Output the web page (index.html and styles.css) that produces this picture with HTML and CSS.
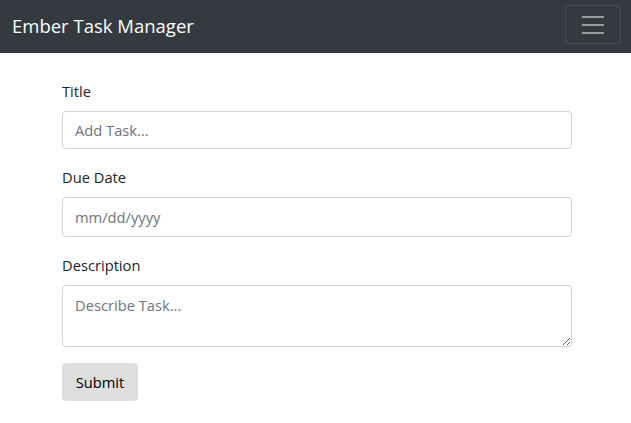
FILE: index.html
```html
<!DOCTYPE html>
<html lang="en">
<head>
<meta charset="utf-8">
<title>Ember Task Manager</title>
<link rel="stylesheet" href="styles.css">
</head>
<body>
<nav class="navbar">
  <a class="brand" href="#">Ember Task Manager</a>
  <button class="toggler" type="button" aria-label="Toggle navigation">
    <svg class="toggler-icon" viewBox="0 0 30 30" width="30" height="30">
      <path stroke="rgba(255,255,255,0.5)" stroke-width="2" stroke-miterlimit="10" d="M4 7h22M4 15h22M4 23h22"/>
    </svg>
  </button>
</nav>
<main class="content">
  <form class="task-form">
    <div class="group">
      <label class="label" for="title">Title</label>
      <input class="control" id="title" type="text" placeholder="Add Task...">
    </div>
    <div class="group">
      <label class="label" for="due">Due Date</label>
      <input class="control date" id="due" type="text" placeholder="mm/dd/yyyy">
    </div>
    <div class="group">
      <label class="label" for="desc">Description</label>
      <textarea class="control area" id="desc" rows="2" placeholder="Describe Task..."></textarea>
    </div>
    <button class="submit" type="submit">Submit</button>
  </form>
</main>
</body>
</html>
```
FILE: styles.css
```css
* { box-sizing: border-box; }
html, body { margin: 0; padding: 0; background: #fff; }
body {
  font-family: "Segoe UI", "Open Sans", "Noto Sans", sans-serif;
  font-size: 14.7px;
  line-height: 24px;
  color: #212529;
}
.navbar {
  height: 53px;
  background: #343a40;
  display: flex;
  align-items: flex-start;
  justify-content: space-between;
  padding: 0 10px 0 12px;
}
.brand {
  color: #fff;
  text-decoration: none;
  font-size: 18.5px;
  line-height: 30px;
  margin-top: 11px;
}
.toggler {
  margin-top: 5px;
  width: 56px;
  height: 39px;
  padding: 0;
  background: transparent;
  border: 1px solid rgba(255,255,255,0.1);
  border-radius: 4px;
  display: flex;
  align-items: center;
  justify-content: center;
}
.toggler-icon { display: block; }
.content {
  padding: 26px 59px 0 62px;
}
.group { margin-bottom: 16px; }
.label {
  display: block;
  margin-bottom: 8px;
}
.control {
  display: block;
  width: 100%;
  height: 38px;
  padding: 6px 12px;
  font: inherit;
  color: #495057;
  background: #fff;
  border: 1px solid #ced4da;
  border-radius: 4px;
}
.control::placeholder { color: #6c757d; opacity: 1; }
.date { height: 40px; }
.area {
  height: 62px;
  padding-top: 7px;
  resize: vertical;
}
.submit {
  font: inherit;
  color: #000;
  background: #dedede;
  border: 1px solid #dedede;
  border-radius: 4px;
  height: 38px;
  width: 76px;
  padding: 0;
}
```
